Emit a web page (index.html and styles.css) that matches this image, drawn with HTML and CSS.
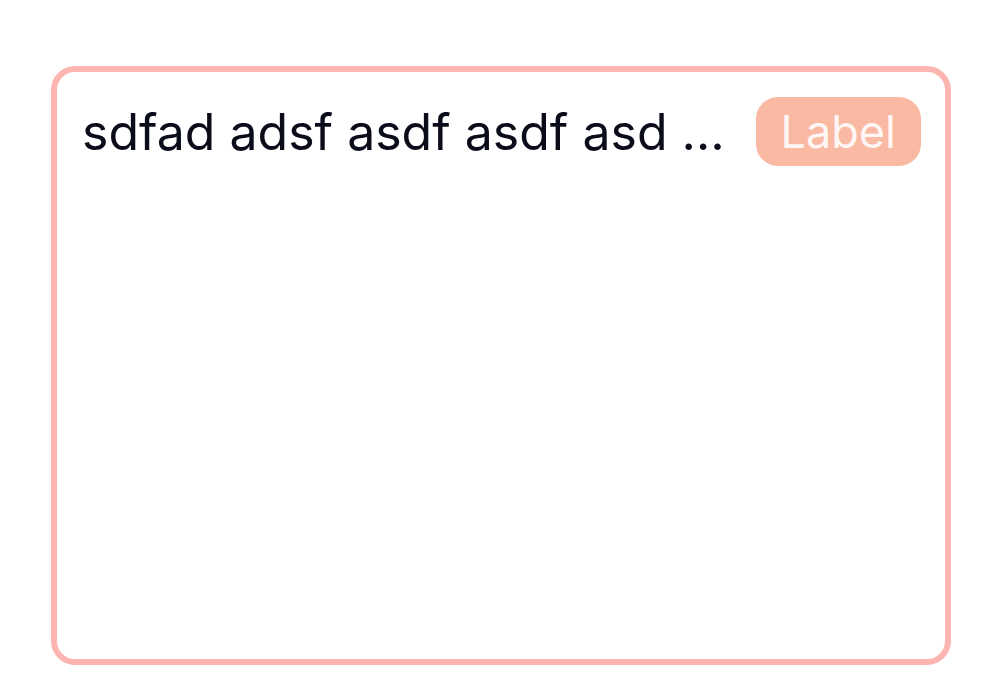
FILE: index.html
```html
<!DOCTYPE html>
<html>
<head>
<meta charset="utf-8">
<link rel="stylesheet" href="styles.css">
</head>
<body>
<div class="card">
  <div class="card-header">
    <div class="title">sdfad adsf asdf asdf asd …</div>
    <span class="label">Label</span>
  </div>
</div>
</body>
</html>
```
FILE: styles.css
```css
html, body {
  margin: 0;
  padding: 0;
  background: #ffffff;
}
body {
  width: 986px;
  height: 697px;
  font-family: Inter, "Noto Sans", sans-serif;
  padding: 66px 35px 32px 51px;
  box-sizing: border-box;
}
.card {
  width: 900px;
  height: 599px;
  box-sizing: border-box;
  border: 6px solid #fdb5b2;
  border-radius: 24px;
  padding: 25px 24px 24px 25px;
}
.card-header {
  display: flex;
  align-items: center;
  gap: 20px;
}
.title {
  flex: 1;
  min-width: 0;
  white-space: nowrap;
  overflow: hidden;
  font-size: 50px;
  color: #0b0c1a;
  line-height: 1.2;
}
.label {
  flex: none;
  background: #f9b9a3;
  color: #fdf6f4;
  font-size: 45px;
  line-height: 69px;
  height: 69px;
  padding: 0 25px;
  border-radius: 22px;
}
```
